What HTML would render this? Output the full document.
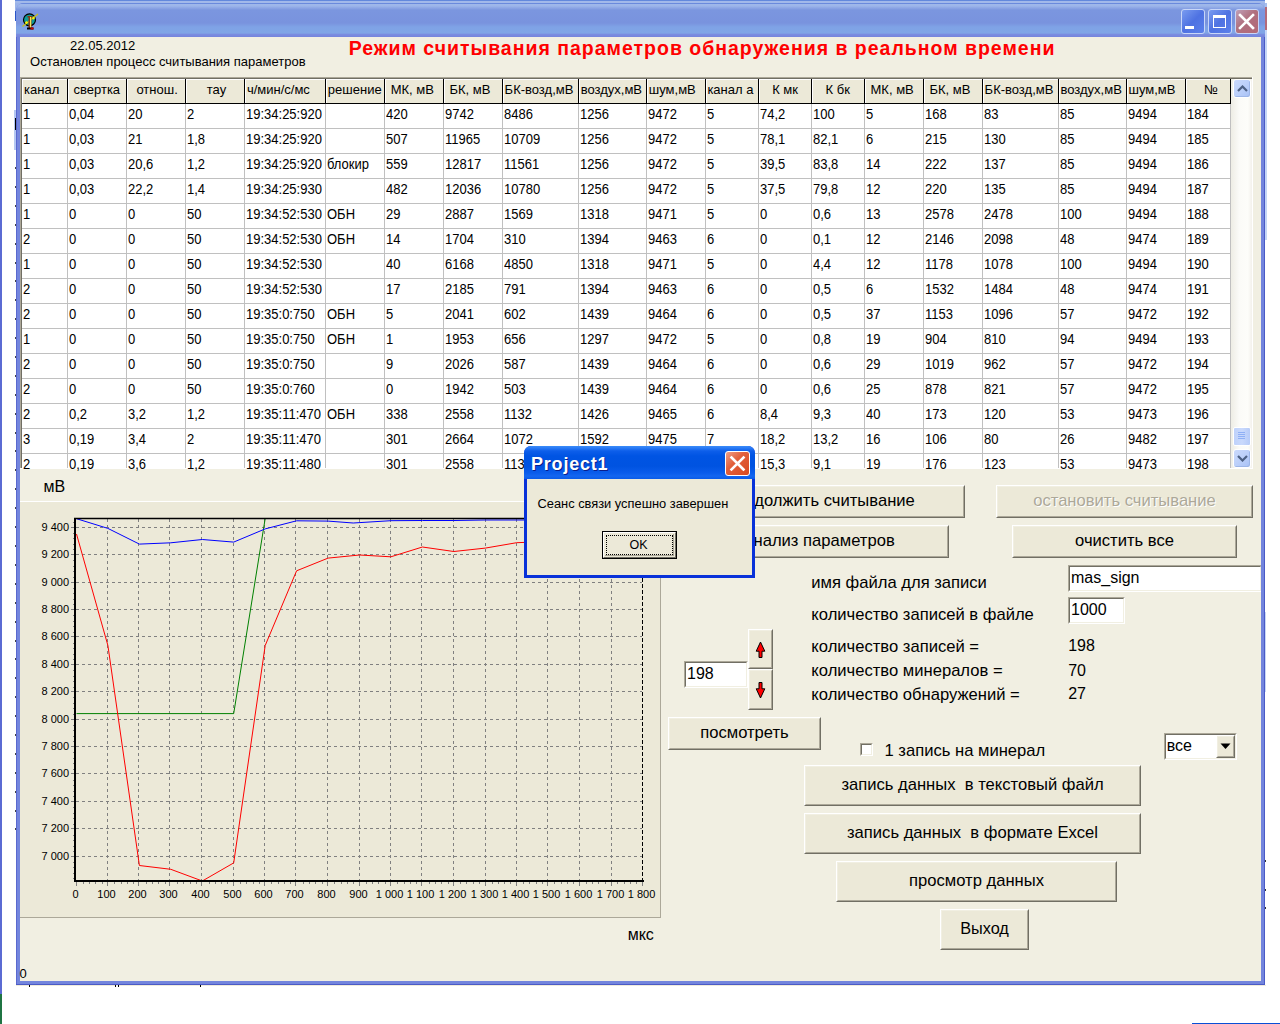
<!DOCTYPE html><html><head><meta charset="utf-8"><style>
html,body{margin:0;padding:0}
body{width:1280px;height:1024px;position:relative;overflow:hidden;background:#fff;font-family:"Liberation Sans", sans-serif}
div,svg{position:absolute}
.t{white-space:pre;color:#000}
.btn{box-sizing:border-box;background:#ECE9D8;border-top:1px solid #fff;border-left:1px solid #fff;border-right:1px solid #716F64;border-bottom:1px solid #716F64}
.btn::after{content:"";position:absolute;left:0;top:0;right:0;bottom:0;border-right:1px solid #ACA899;border-bottom:1px solid #ACA899;border-top:1px solid #F1EFE2;border-left:1px solid #F1EFE2}
.bi{position:absolute;left:0;right:0;top:0px;text-align:center;white-space:pre}
.edit{box-sizing:border-box;background:#fff;border-top:1px solid #ACA899;border-left:1px solid #ACA899;border-right:1px solid #fff;border-bottom:1px solid #fff;overflow:hidden}
.edit::before{content:"";position:absolute;left:0;top:0;right:0;bottom:0;border-top:1px solid #716F64;border-left:1px solid #716F64;border-right:1px solid #F1EFE2;border-bottom:1px solid #F1EFE2}
</style></head><body>
<div style="left:0px;top:0px;width:2px;height:994px;background:#5B6BD3"></div>
<div style="left:0px;top:994px;width:2px;height:30px;background:#1F7443"></div>
<div style="left:15px;top:0px;width:1250px;height:1px;background:#6389DC"></div>
<div style="left:15px;top:1px;width:1250px;height:2px;background:#A2B9EA"></div>
<div style="left:1265px;top:0px;width:15px;height:3px;background:#fff"></div>
<div style="left:16px;top:985px;width:1250px;height:1px;background:#EFEBDC"></div>
<div style="left:1192px;top:1023px;width:88px;height:1px;background:#0A4FD6"></div>
<div style="left:15px;top:167px;width:1px;height:2px;background:#444"></div>
<div style="left:15px;top:186px;width:1px;height:2px;background:#444"></div>
<div style="left:15px;top:205px;width:1px;height:2px;background:#444"></div>
<div style="left:15px;top:224px;width:1px;height:2px;background:#444"></div>
<div style="left:15px;top:243px;width:1px;height:2px;background:#444"></div>
<div style="left:15px;top:262px;width:1px;height:2px;background:#444"></div>
<div style="left:15px;top:280px;width:1px;height:2px;background:#444"></div>
<div style="left:15px;top:299px;width:1px;height:2px;background:#444"></div>
<div style="left:15px;top:318px;width:1px;height:2px;background:#444"></div>
<div style="left:15px;top:337px;width:1px;height:2px;background:#444"></div>
<div style="left:15px;top:356px;width:1px;height:2px;background:#444"></div>
<div style="left:15px;top:375px;width:1px;height:2px;background:#444"></div>
<div style="left:15px;top:394px;width:1px;height:2px;background:#444"></div>
<div style="left:15px;top:413px;width:1px;height:2px;background:#444"></div>
<div style="left:15px;top:432px;width:1px;height:2px;background:#444"></div>
<div style="left:15px;top:450px;width:1px;height:2px;background:#444"></div>
<div style="left:15px;top:469px;width:1px;height:2px;background:#444"></div>
<div style="left:15px;top:488px;width:1px;height:2px;background:#444"></div>
<div style="left:15px;top:507px;width:1px;height:2px;background:#444"></div>
<div style="left:15px;top:526px;width:1px;height:2px;background:#444"></div>
<div style="left:15px;top:545px;width:1px;height:2px;background:#444"></div>
<div style="left:15px;top:564px;width:1px;height:2px;background:#444"></div>
<div style="left:15px;top:583px;width:1px;height:2px;background:#444"></div>
<div style="left:15px;top:602px;width:1px;height:2px;background:#444"></div>
<div style="left:15px;top:621px;width:1px;height:2px;background:#444"></div>
<div style="left:15px;top:640px;width:1px;height:2px;background:#444"></div>
<div style="left:15px;top:658px;width:1px;height:2px;background:#444"></div>
<div style="left:15px;top:677px;width:1px;height:2px;background:#444"></div>
<div style="left:15px;top:696px;width:1px;height:2px;background:#444"></div>
<div style="left:15px;top:715px;width:1px;height:2px;background:#444"></div>
<div style="left:15px;top:734px;width:1px;height:2px;background:#444"></div>
<div style="left:15px;top:753px;width:1px;height:2px;background:#444"></div>
<div style="left:15px;top:772px;width:1px;height:2px;background:#444"></div>
<div style="left:15px;top:791px;width:1px;height:2px;background:#444"></div>
<div style="left:15px;top:810px;width:1px;height:2px;background:#444"></div>
<div style="left:15px;top:828px;width:1px;height:2px;background:#444"></div>
<div style="left:14px;top:110px;width:2px;height:40px;background:#B5C8F2"></div>
<div style="left:15px;top:118px;width:1px;height:12px;background:#000"></div>
<div style="left:1265px;top:860px;width:1px;height:2px;background:#333"></div>
<div style="left:1265px;top:889px;width:1px;height:2px;background:#333"></div>
<div style="left:1265px;top:907px;width:1px;height:2px;background:#333"></div>
<div style="left:1265px;top:612px;width:1px;height:80px;background:#C9D8F6"></div>
<div style="left:29px;top:985px;width:1px;height:2px;background:#000"></div>
<div style="left:115px;top:985px;width:1px;height:2px;background:#000"></div>
<div style="left:118px;top:985px;width:1px;height:2px;background:#000"></div>
<div style="left:200px;top:985px;width:1px;height:2px;background:#000"></div>
<div style="left:1265px;top:30px;width:2px;height:210px;background:#C5D6F7"></div>
<div style="left:1265px;top:7px;width:2px;height:23px;background:#B46A7A"></div>
<div style="left:1265px;top:3px;width:2px;height:4px;background:#A9BFEC"></div>
<div style="left:15px;top:3px;width:12px;height:8px;background:#9AB3E9"></div>
<div style="left:15px;top:11px;width:1px;height:10px;background:#2A55C8"></div>
<div style="left:1254px;top:3px;width:11px;height:8px;background:#9AB3E9"></div>
<div style="left:16px;top:3px;width:1249px;height:982px;background:#7385DD;border-radius:8px 8px 0 0;"></div>
<div style="left:16px;top:20px;width:1px;height:965px;background:#5A69CF"></div>
<div style="left:1264px;top:20px;width:1px;height:965px;background:#4B5BC6"></div>
<div style="left:16px;top:984px;width:1249px;height:1px;background:#4B5BC6"></div>
<div style="left:16px;top:3px;width:1249px;height:34px;border-radius:8px 8px 0 0;background:linear-gradient(#6A8ADC 0px,#6A8ADC 1px,#9FB8EA 1px,#9CB5EA 3px,#7B96DF 7px,#7993DE 20px,#7FA3E6 24px,#80A5E6 30px,#7A8CE0 31.5px,#7584DC 34px);"></div>
<div style="left:20px;top:37px;width:1241px;height:944px;background:#F1EFE2"></div>
<svg style="left:21px;top:12px" width="18" height="18" viewBox="0 0 18 18">
<circle cx="8.5" cy="7.8" r="6" fill="#0E9A96" stroke="#000" stroke-width="1.2"/>
<line x1="1.5" y1="14.5" x2="17" y2="2" stroke="#C8BE1A" stroke-width="1.3"/>
<path d="M5.5 9 l1.6 1.6 l-1.6 1.6 l-1.6 -1.6z" fill="#FFF200"/>
<path d="M12.5 4.5 l1.6 1.6 l-1.6 1.6 l-1.6 -1.6z" fill="#FFF200"/>
<rect x="6.5" y="4" width="5" height="1.5" fill="#8B2A10"/>
<rect x="7.5" y="4" width="3" height="12" fill="#8B3A10"/>
<rect x="9" y="5" width="1.2" height="11" fill="#F3E65A"/>
<rect x="6" y="15.5" width="6.5" height="2" fill="#000"/>
<rect x="9.5" y="15.5" width="3" height="2" fill="#C00000"/>
</svg>
<div style="left:1181px;top:9px;width:22px;height:23px;border:1px solid #C8D6F8;border-radius:3px;background:linear-gradient(135deg,#7A9CF0,#4E72E2 50%,#5B80EA)"></div>
<div style="left:1208px;top:9px;width:22px;height:23px;border:1px solid #C8D6F8;border-radius:3px;background:linear-gradient(135deg,#7A9CF0,#4E72E2 50%,#5B80EA)"></div>
<div style="left:1235px;top:9px;width:22px;height:23px;border:1px solid #C8D6F8;border-radius:3px;background:linear-gradient(135deg,#C0A0B8,#B0707E 45%,#B36A78)"></div>
<div style="left:1185px;top:26px;width:9px;height:3px;background:#fff"></div>
<div style="left:1213px;top:15px;width:13px;height:13px;box-sizing:border-box;border:1px solid #fff;border-top:3px solid #fff"></div>
<svg style="left:1238px;top:13px" width="17" height="17" viewBox="0 0 17 17"><path d="M2 2 L15 15 M15 2 L2 15" stroke="#fff" stroke-width="2.6" stroke-linecap="square"/></svg>
<div class="t" style="left:70.09px;top:37.60px;font-size:13px;line-height:15px;">22.05.2012</div>
<div class="t" style="left:30.09px;top:54.30px;font-size:13px;line-height:15px;">Остановлен процесс считывания параметров</div>
<div class="t" style="left:348.63px;top:37.04px;font-size:19.5px;line-height:22px;font-weight:bold;color:#F00;letter-spacing:0.99px">Режим считывания параметров обнаружения в реальном времени</div>
<div style="left:20px;top:77px;width:1233px;height:392px;background:#F1EFE2">
<div style="left:2px;top:2px;width:1209px;height:389px;background:#fff"></div>
<div style="left:0px;top:0px;width:1233px;height:1px;background:#ACA899"></div>
<div style="left:0px;top:0px;width:1px;height:392px;background:#ACA899"></div>
<div style="left:1px;top:1px;width:1231px;height:1px;background:#716F64"></div>
<div style="left:1px;top:1px;width:1px;height:390px;background:#716F64"></div>
<div style="left:1232px;top:0px;width:1px;height:392px;background:#fff"></div>
<div style="left:0px;top:391px;width:1233px;height:1px;background:#fff"></div>
<div style="left:2px;top:2px;width:45px;height:24px;background:#ECE9D8;border-top:1px solid #fff;border-left:1px solid #fff;box-sizing:border-box"></div>
<div style="left:47px;top:2px;width:1px;height:25px;background:#000"></div>
<div style="left:48px;top:2px;width:58px;height:24px;background:#ECE9D8;border-top:1px solid #fff;border-left:1px solid #fff;box-sizing:border-box"></div>
<div style="left:106px;top:2px;width:1px;height:25px;background:#000"></div>
<div style="left:107px;top:2px;width:58px;height:24px;background:#ECE9D8;border-top:1px solid #fff;border-left:1px solid #fff;box-sizing:border-box"></div>
<div style="left:165px;top:2px;width:1px;height:25px;background:#000"></div>
<div style="left:166px;top:2px;width:58px;height:24px;background:#ECE9D8;border-top:1px solid #fff;border-left:1px solid #fff;box-sizing:border-box"></div>
<div style="left:224px;top:2px;width:1px;height:25px;background:#000"></div>
<div style="left:225px;top:2px;width:80px;height:24px;background:#ECE9D8;border-top:1px solid #fff;border-left:1px solid #fff;box-sizing:border-box"></div>
<div style="left:305px;top:2px;width:1px;height:25px;background:#000"></div>
<div style="left:306px;top:2px;width:58px;height:24px;background:#ECE9D8;border-top:1px solid #fff;border-left:1px solid #fff;box-sizing:border-box"></div>
<div style="left:364px;top:2px;width:1px;height:25px;background:#000"></div>
<div style="left:365px;top:2px;width:58px;height:24px;background:#ECE9D8;border-top:1px solid #fff;border-left:1px solid #fff;box-sizing:border-box"></div>
<div style="left:423px;top:2px;width:1px;height:25px;background:#000"></div>
<div style="left:424px;top:2px;width:58px;height:24px;background:#ECE9D8;border-top:1px solid #fff;border-left:1px solid #fff;box-sizing:border-box"></div>
<div style="left:482px;top:2px;width:1px;height:25px;background:#000"></div>
<div style="left:483px;top:2px;width:75px;height:24px;background:#ECE9D8;border-top:1px solid #fff;border-left:1px solid #fff;box-sizing:border-box"></div>
<div style="left:558px;top:2px;width:1px;height:25px;background:#000"></div>
<div style="left:559px;top:2px;width:67px;height:24px;background:#ECE9D8;border-top:1px solid #fff;border-left:1px solid #fff;box-sizing:border-box"></div>
<div style="left:626px;top:2px;width:1px;height:25px;background:#000"></div>
<div style="left:627px;top:2px;width:58px;height:24px;background:#ECE9D8;border-top:1px solid #fff;border-left:1px solid #fff;box-sizing:border-box"></div>
<div style="left:685px;top:2px;width:1px;height:25px;background:#000"></div>
<div style="left:686px;top:2px;width:52px;height:24px;background:#ECE9D8;border-top:1px solid #fff;border-left:1px solid #fff;box-sizing:border-box"></div>
<div style="left:738px;top:2px;width:1px;height:25px;background:#000"></div>
<div style="left:739px;top:2px;width:52px;height:24px;background:#ECE9D8;border-top:1px solid #fff;border-left:1px solid #fff;box-sizing:border-box"></div>
<div style="left:791px;top:2px;width:1px;height:25px;background:#000"></div>
<div style="left:792px;top:2px;width:52px;height:24px;background:#ECE9D8;border-top:1px solid #fff;border-left:1px solid #fff;box-sizing:border-box"></div>
<div style="left:844px;top:2px;width:1px;height:25px;background:#000"></div>
<div style="left:845px;top:2px;width:58px;height:24px;background:#ECE9D8;border-top:1px solid #fff;border-left:1px solid #fff;box-sizing:border-box"></div>
<div style="left:903px;top:2px;width:1px;height:25px;background:#000"></div>
<div style="left:904px;top:2px;width:58px;height:24px;background:#ECE9D8;border-top:1px solid #fff;border-left:1px solid #fff;box-sizing:border-box"></div>
<div style="left:962px;top:2px;width:1px;height:25px;background:#000"></div>
<div style="left:963px;top:2px;width:75px;height:24px;background:#ECE9D8;border-top:1px solid #fff;border-left:1px solid #fff;box-sizing:border-box"></div>
<div style="left:1038px;top:2px;width:1px;height:25px;background:#000"></div>
<div style="left:1039px;top:2px;width:67px;height:24px;background:#ECE9D8;border-top:1px solid #fff;border-left:1px solid #fff;box-sizing:border-box"></div>
<div style="left:1106px;top:2px;width:1px;height:25px;background:#000"></div>
<div style="left:1107px;top:2px;width:58px;height:24px;background:#ECE9D8;border-top:1px solid #fff;border-left:1px solid #fff;box-sizing:border-box"></div>
<div style="left:1165px;top:2px;width:1px;height:25px;background:#000"></div>
<div style="left:1166px;top:2px;width:44px;height:24px;background:#ECE9D8;border-top:1px solid #fff;border-left:1px solid #fff;box-sizing:border-box"></div>
<div style="left:1210px;top:2px;width:1px;height:25px;background:#000"></div>
<div style="left:2px;top:26px;width:1209px;height:1px;background:#000"></div>
<div style="left:47px;top:27px;width:1px;height:364px;background:#C0C0C0"></div>
<div style="left:106px;top:27px;width:1px;height:364px;background:#C0C0C0"></div>
<div style="left:165px;top:27px;width:1px;height:364px;background:#C0C0C0"></div>
<div style="left:224px;top:27px;width:1px;height:364px;background:#C0C0C0"></div>
<div style="left:305px;top:27px;width:1px;height:364px;background:#C0C0C0"></div>
<div style="left:364px;top:27px;width:1px;height:364px;background:#C0C0C0"></div>
<div style="left:423px;top:27px;width:1px;height:364px;background:#C0C0C0"></div>
<div style="left:482px;top:27px;width:1px;height:364px;background:#C0C0C0"></div>
<div style="left:558px;top:27px;width:1px;height:364px;background:#C0C0C0"></div>
<div style="left:626px;top:27px;width:1px;height:364px;background:#C0C0C0"></div>
<div style="left:685px;top:27px;width:1px;height:364px;background:#C0C0C0"></div>
<div style="left:738px;top:27px;width:1px;height:364px;background:#C0C0C0"></div>
<div style="left:791px;top:27px;width:1px;height:364px;background:#C0C0C0"></div>
<div style="left:844px;top:27px;width:1px;height:364px;background:#C0C0C0"></div>
<div style="left:903px;top:27px;width:1px;height:364px;background:#C0C0C0"></div>
<div style="left:962px;top:27px;width:1px;height:364px;background:#C0C0C0"></div>
<div style="left:1038px;top:27px;width:1px;height:364px;background:#C0C0C0"></div>
<div style="left:1106px;top:27px;width:1px;height:364px;background:#C0C0C0"></div>
<div style="left:1165px;top:27px;width:1px;height:364px;background:#C0C0C0"></div>
<div style="left:1210px;top:27px;width:1px;height:364px;background:#C0C0C0"></div>
<div style="left:2px;top:51px;width:1209px;height:1px;background:#C0C0C0"></div>
<div style="left:2px;top:76px;width:1209px;height:1px;background:#C0C0C0"></div>
<div style="left:2px;top:101px;width:1209px;height:1px;background:#C0C0C0"></div>
<div style="left:2px;top:126px;width:1209px;height:1px;background:#C0C0C0"></div>
<div style="left:2px;top:151px;width:1209px;height:1px;background:#C0C0C0"></div>
<div style="left:2px;top:176px;width:1209px;height:1px;background:#C0C0C0"></div>
<div style="left:2px;top:201px;width:1209px;height:1px;background:#C0C0C0"></div>
<div style="left:2px;top:226px;width:1209px;height:1px;background:#C0C0C0"></div>
<div style="left:2px;top:251px;width:1209px;height:1px;background:#C0C0C0"></div>
<div style="left:2px;top:276px;width:1209px;height:1px;background:#C0C0C0"></div>
<div style="left:2px;top:301px;width:1209px;height:1px;background:#C0C0C0"></div>
<div style="left:2px;top:326px;width:1209px;height:1px;background:#C0C0C0"></div>
<div style="left:2px;top:351px;width:1209px;height:1px;background:#C0C0C0"></div>
<div style="left:2px;top:376px;width:1209px;height:1px;background:#C0C0C0"></div>
<div class="t" style="left:4.10px;top:5px;font-size:13px;line-height:15px">канал</div>
<div class="t" style="left:53.50px;top:5px;font-size:13px;line-height:15px">свертка</div>
<div class="t" style="left:116.40px;top:5px;font-size:13px;line-height:15px">отнош.</div>
<div class="t" style="left:186.80px;top:5px;font-size:13px;line-height:15px">тау</div>
<div class="t" style="left:226.90px;top:5px;font-size:13px;line-height:15px">ч/мин/с/мс</div>
<div class="t" style="left:307.85px;top:5px;font-size:13px;line-height:15px">решение</div>
<div class="t" style="left:370.70px;top:5px;font-size:13px;line-height:15px">МК, мВ</div>
<div class="t" style="left:429.40px;top:5px;font-size:13px;line-height:15px">БК, мВ</div>
<div class="t" style="left:484.60px;top:5px;font-size:13px;line-height:15px">БК-возд,мВ</div>
<div class="t" style="left:560.70px;top:5px;font-size:13px;line-height:15px">воздух,мВ</div>
<div class="t" style="left:628.80px;top:5px;font-size:13px;line-height:15px">шум,мВ</div>
<div class="t" style="left:687.40px;top:5px;font-size:13px;line-height:15px">канал а</div>
<div class="t" style="left:752.20px;top:5px;font-size:13px;line-height:15px">К мк</div>
<div class="t" style="left:805.50px;top:5px;font-size:13px;line-height:15px">К бк</div>
<div class="t" style="left:850.50px;top:5px;font-size:13px;line-height:15px">МК, мВ</div>
<div class="t" style="left:909.40px;top:5px;font-size:13px;line-height:15px">БК, мВ</div>
<div class="t" style="left:964.60px;top:5px;font-size:13px;line-height:15px">БК-возд,мВ</div>
<div class="t" style="left:1040.50px;top:5px;font-size:13px;line-height:15px">воздух,мВ</div>
<div class="t" style="left:1108.50px;top:5px;font-size:13px;line-height:15px">шум,мВ</div>
<div class="t" style="left:1184.10px;top:5px;font-size:13px;line-height:15px">№</div>
<div class="t" style="left:3px;top:30px;font-size:13px;line-height:15px;transform:scaleY(1.1);transform-origin:0 12px">1</div>
<div class="t" style="left:49px;top:30px;font-size:13px;line-height:15px;transform:scaleY(1.1);transform-origin:0 12px">0,04</div>
<div class="t" style="left:108px;top:30px;font-size:13px;line-height:15px;transform:scaleY(1.1);transform-origin:0 12px">20</div>
<div class="t" style="left:167px;top:30px;font-size:13px;line-height:15px;transform:scaleY(1.1);transform-origin:0 12px">2</div>
<div class="t" style="left:226px;top:30px;font-size:13px;line-height:15px;transform:scaleY(1.1);transform-origin:0 12px">19:34:25:920</div>
<div class="t" style="left:366px;top:30px;font-size:13px;line-height:15px;transform:scaleY(1.1);transform-origin:0 12px">420</div>
<div class="t" style="left:425px;top:30px;font-size:13px;line-height:15px;transform:scaleY(1.1);transform-origin:0 12px">9742</div>
<div class="t" style="left:484px;top:30px;font-size:13px;line-height:15px;transform:scaleY(1.1);transform-origin:0 12px">8486</div>
<div class="t" style="left:560px;top:30px;font-size:13px;line-height:15px;transform:scaleY(1.1);transform-origin:0 12px">1256</div>
<div class="t" style="left:628px;top:30px;font-size:13px;line-height:15px;transform:scaleY(1.1);transform-origin:0 12px">9472</div>
<div class="t" style="left:687px;top:30px;font-size:13px;line-height:15px;transform:scaleY(1.1);transform-origin:0 12px">5</div>
<div class="t" style="left:740px;top:30px;font-size:13px;line-height:15px;transform:scaleY(1.1);transform-origin:0 12px">74,2</div>
<div class="t" style="left:793px;top:30px;font-size:13px;line-height:15px;transform:scaleY(1.1);transform-origin:0 12px">100</div>
<div class="t" style="left:846px;top:30px;font-size:13px;line-height:15px;transform:scaleY(1.1);transform-origin:0 12px">5</div>
<div class="t" style="left:905px;top:30px;font-size:13px;line-height:15px;transform:scaleY(1.1);transform-origin:0 12px">168</div>
<div class="t" style="left:964px;top:30px;font-size:13px;line-height:15px;transform:scaleY(1.1);transform-origin:0 12px">83</div>
<div class="t" style="left:1040px;top:30px;font-size:13px;line-height:15px;transform:scaleY(1.1);transform-origin:0 12px">85</div>
<div class="t" style="left:1108px;top:30px;font-size:13px;line-height:15px;transform:scaleY(1.1);transform-origin:0 12px">9494</div>
<div class="t" style="left:1167px;top:30px;font-size:13px;line-height:15px;transform:scaleY(1.1);transform-origin:0 12px">184</div>
<div class="t" style="left:3px;top:55px;font-size:13px;line-height:15px;transform:scaleY(1.1);transform-origin:0 12px">1</div>
<div class="t" style="left:49px;top:55px;font-size:13px;line-height:15px;transform:scaleY(1.1);transform-origin:0 12px">0,03</div>
<div class="t" style="left:108px;top:55px;font-size:13px;line-height:15px;transform:scaleY(1.1);transform-origin:0 12px">21</div>
<div class="t" style="left:167px;top:55px;font-size:13px;line-height:15px;transform:scaleY(1.1);transform-origin:0 12px">1,8</div>
<div class="t" style="left:226px;top:55px;font-size:13px;line-height:15px;transform:scaleY(1.1);transform-origin:0 12px">19:34:25:920</div>
<div class="t" style="left:366px;top:55px;font-size:13px;line-height:15px;transform:scaleY(1.1);transform-origin:0 12px">507</div>
<div class="t" style="left:425px;top:55px;font-size:13px;line-height:15px;transform:scaleY(1.1);transform-origin:0 12px">11965</div>
<div class="t" style="left:484px;top:55px;font-size:13px;line-height:15px;transform:scaleY(1.1);transform-origin:0 12px">10709</div>
<div class="t" style="left:560px;top:55px;font-size:13px;line-height:15px;transform:scaleY(1.1);transform-origin:0 12px">1256</div>
<div class="t" style="left:628px;top:55px;font-size:13px;line-height:15px;transform:scaleY(1.1);transform-origin:0 12px">9472</div>
<div class="t" style="left:687px;top:55px;font-size:13px;line-height:15px;transform:scaleY(1.1);transform-origin:0 12px">5</div>
<div class="t" style="left:740px;top:55px;font-size:13px;line-height:15px;transform:scaleY(1.1);transform-origin:0 12px">78,1</div>
<div class="t" style="left:793px;top:55px;font-size:13px;line-height:15px;transform:scaleY(1.1);transform-origin:0 12px">82,1</div>
<div class="t" style="left:846px;top:55px;font-size:13px;line-height:15px;transform:scaleY(1.1);transform-origin:0 12px">6</div>
<div class="t" style="left:905px;top:55px;font-size:13px;line-height:15px;transform:scaleY(1.1);transform-origin:0 12px">215</div>
<div class="t" style="left:964px;top:55px;font-size:13px;line-height:15px;transform:scaleY(1.1);transform-origin:0 12px">130</div>
<div class="t" style="left:1040px;top:55px;font-size:13px;line-height:15px;transform:scaleY(1.1);transform-origin:0 12px">85</div>
<div class="t" style="left:1108px;top:55px;font-size:13px;line-height:15px;transform:scaleY(1.1);transform-origin:0 12px">9494</div>
<div class="t" style="left:1167px;top:55px;font-size:13px;line-height:15px;transform:scaleY(1.1);transform-origin:0 12px">185</div>
<div class="t" style="left:3px;top:80px;font-size:13px;line-height:15px;transform:scaleY(1.1);transform-origin:0 12px">1</div>
<div class="t" style="left:49px;top:80px;font-size:13px;line-height:15px;transform:scaleY(1.1);transform-origin:0 12px">0,03</div>
<div class="t" style="left:108px;top:80px;font-size:13px;line-height:15px;transform:scaleY(1.1);transform-origin:0 12px">20,6</div>
<div class="t" style="left:167px;top:80px;font-size:13px;line-height:15px;transform:scaleY(1.1);transform-origin:0 12px">1,2</div>
<div class="t" style="left:226px;top:80px;font-size:13px;line-height:15px;transform:scaleY(1.1);transform-origin:0 12px">19:34:25:920</div>
<div class="t" style="left:307px;top:80px;font-size:13px;line-height:15px;transform:scaleY(1.1);transform-origin:0 12px">блокир</div>
<div class="t" style="left:366px;top:80px;font-size:13px;line-height:15px;transform:scaleY(1.1);transform-origin:0 12px">559</div>
<div class="t" style="left:425px;top:80px;font-size:13px;line-height:15px;transform:scaleY(1.1);transform-origin:0 12px">12817</div>
<div class="t" style="left:484px;top:80px;font-size:13px;line-height:15px;transform:scaleY(1.1);transform-origin:0 12px">11561</div>
<div class="t" style="left:560px;top:80px;font-size:13px;line-height:15px;transform:scaleY(1.1);transform-origin:0 12px">1256</div>
<div class="t" style="left:628px;top:80px;font-size:13px;line-height:15px;transform:scaleY(1.1);transform-origin:0 12px">9472</div>
<div class="t" style="left:687px;top:80px;font-size:13px;line-height:15px;transform:scaleY(1.1);transform-origin:0 12px">5</div>
<div class="t" style="left:740px;top:80px;font-size:13px;line-height:15px;transform:scaleY(1.1);transform-origin:0 12px">39,5</div>
<div class="t" style="left:793px;top:80px;font-size:13px;line-height:15px;transform:scaleY(1.1);transform-origin:0 12px">83,8</div>
<div class="t" style="left:846px;top:80px;font-size:13px;line-height:15px;transform:scaleY(1.1);transform-origin:0 12px">14</div>
<div class="t" style="left:905px;top:80px;font-size:13px;line-height:15px;transform:scaleY(1.1);transform-origin:0 12px">222</div>
<div class="t" style="left:964px;top:80px;font-size:13px;line-height:15px;transform:scaleY(1.1);transform-origin:0 12px">137</div>
<div class="t" style="left:1040px;top:80px;font-size:13px;line-height:15px;transform:scaleY(1.1);transform-origin:0 12px">85</div>
<div class="t" style="left:1108px;top:80px;font-size:13px;line-height:15px;transform:scaleY(1.1);transform-origin:0 12px">9494</div>
<div class="t" style="left:1167px;top:80px;font-size:13px;line-height:15px;transform:scaleY(1.1);transform-origin:0 12px">186</div>
<div class="t" style="left:3px;top:105px;font-size:13px;line-height:15px;transform:scaleY(1.1);transform-origin:0 12px">1</div>
<div class="t" style="left:49px;top:105px;font-size:13px;line-height:15px;transform:scaleY(1.1);transform-origin:0 12px">0,03</div>
<div class="t" style="left:108px;top:105px;font-size:13px;line-height:15px;transform:scaleY(1.1);transform-origin:0 12px">22,2</div>
<div class="t" style="left:167px;top:105px;font-size:13px;line-height:15px;transform:scaleY(1.1);transform-origin:0 12px">1,4</div>
<div class="t" style="left:226px;top:105px;font-size:13px;line-height:15px;transform:scaleY(1.1);transform-origin:0 12px">19:34:25:930</div>
<div class="t" style="left:366px;top:105px;font-size:13px;line-height:15px;transform:scaleY(1.1);transform-origin:0 12px">482</div>
<div class="t" style="left:425px;top:105px;font-size:13px;line-height:15px;transform:scaleY(1.1);transform-origin:0 12px">12036</div>
<div class="t" style="left:484px;top:105px;font-size:13px;line-height:15px;transform:scaleY(1.1);transform-origin:0 12px">10780</div>
<div class="t" style="left:560px;top:105px;font-size:13px;line-height:15px;transform:scaleY(1.1);transform-origin:0 12px">1256</div>
<div class="t" style="left:628px;top:105px;font-size:13px;line-height:15px;transform:scaleY(1.1);transform-origin:0 12px">9472</div>
<div class="t" style="left:687px;top:105px;font-size:13px;line-height:15px;transform:scaleY(1.1);transform-origin:0 12px">5</div>
<div class="t" style="left:740px;top:105px;font-size:13px;line-height:15px;transform:scaleY(1.1);transform-origin:0 12px">37,5</div>
<div class="t" style="left:793px;top:105px;font-size:13px;line-height:15px;transform:scaleY(1.1);transform-origin:0 12px">79,8</div>
<div class="t" style="left:846px;top:105px;font-size:13px;line-height:15px;transform:scaleY(1.1);transform-origin:0 12px">12</div>
<div class="t" style="left:905px;top:105px;font-size:13px;line-height:15px;transform:scaleY(1.1);transform-origin:0 12px">220</div>
<div class="t" style="left:964px;top:105px;font-size:13px;line-height:15px;transform:scaleY(1.1);transform-origin:0 12px">135</div>
<div class="t" style="left:1040px;top:105px;font-size:13px;line-height:15px;transform:scaleY(1.1);transform-origin:0 12px">85</div>
<div class="t" style="left:1108px;top:105px;font-size:13px;line-height:15px;transform:scaleY(1.1);transform-origin:0 12px">9494</div>
<div class="t" style="left:1167px;top:105px;font-size:13px;line-height:15px;transform:scaleY(1.1);transform-origin:0 12px">187</div>
<div class="t" style="left:3px;top:130px;font-size:13px;line-height:15px;transform:scaleY(1.1);transform-origin:0 12px">1</div>
<div class="t" style="left:49px;top:130px;font-size:13px;line-height:15px;transform:scaleY(1.1);transform-origin:0 12px">0</div>
<div class="t" style="left:108px;top:130px;font-size:13px;line-height:15px;transform:scaleY(1.1);transform-origin:0 12px">0</div>
<div class="t" style="left:167px;top:130px;font-size:13px;line-height:15px;transform:scaleY(1.1);transform-origin:0 12px">50</div>
<div class="t" style="left:226px;top:130px;font-size:13px;line-height:15px;transform:scaleY(1.1);transform-origin:0 12px">19:34:52:530</div>
<div class="t" style="left:307px;top:130px;font-size:13px;line-height:15px;transform:scaleY(1.1);transform-origin:0 12px">ОБН</div>
<div class="t" style="left:366px;top:130px;font-size:13px;line-height:15px;transform:scaleY(1.1);transform-origin:0 12px">29</div>
<div class="t" style="left:425px;top:130px;font-size:13px;line-height:15px;transform:scaleY(1.1);transform-origin:0 12px">2887</div>
<div class="t" style="left:484px;top:130px;font-size:13px;line-height:15px;transform:scaleY(1.1);transform-origin:0 12px">1569</div>
<div class="t" style="left:560px;top:130px;font-size:13px;line-height:15px;transform:scaleY(1.1);transform-origin:0 12px">1318</div>
<div class="t" style="left:628px;top:130px;font-size:13px;line-height:15px;transform:scaleY(1.1);transform-origin:0 12px">9471</div>
<div class="t" style="left:687px;top:130px;font-size:13px;line-height:15px;transform:scaleY(1.1);transform-origin:0 12px">5</div>
<div class="t" style="left:740px;top:130px;font-size:13px;line-height:15px;transform:scaleY(1.1);transform-origin:0 12px">0</div>
<div class="t" style="left:793px;top:130px;font-size:13px;line-height:15px;transform:scaleY(1.1);transform-origin:0 12px">0,6</div>
<div class="t" style="left:846px;top:130px;font-size:13px;line-height:15px;transform:scaleY(1.1);transform-origin:0 12px">13</div>
<div class="t" style="left:905px;top:130px;font-size:13px;line-height:15px;transform:scaleY(1.1);transform-origin:0 12px">2578</div>
<div class="t" style="left:964px;top:130px;font-size:13px;line-height:15px;transform:scaleY(1.1);transform-origin:0 12px">2478</div>
<div class="t" style="left:1040px;top:130px;font-size:13px;line-height:15px;transform:scaleY(1.1);transform-origin:0 12px">100</div>
<div class="t" style="left:1108px;top:130px;font-size:13px;line-height:15px;transform:scaleY(1.1);transform-origin:0 12px">9494</div>
<div class="t" style="left:1167px;top:130px;font-size:13px;line-height:15px;transform:scaleY(1.1);transform-origin:0 12px">188</div>
<div class="t" style="left:3px;top:155px;font-size:13px;line-height:15px;transform:scaleY(1.1);transform-origin:0 12px">2</div>
<div class="t" style="left:49px;top:155px;font-size:13px;line-height:15px;transform:scaleY(1.1);transform-origin:0 12px">0</div>
<div class="t" style="left:108px;top:155px;font-size:13px;line-height:15px;transform:scaleY(1.1);transform-origin:0 12px">0</div>
<div class="t" style="left:167px;top:155px;font-size:13px;line-height:15px;transform:scaleY(1.1);transform-origin:0 12px">50</div>
<div class="t" style="left:226px;top:155px;font-size:13px;line-height:15px;transform:scaleY(1.1);transform-origin:0 12px">19:34:52:530</div>
<div class="t" style="left:307px;top:155px;font-size:13px;line-height:15px;transform:scaleY(1.1);transform-origin:0 12px">ОБН</div>
<div class="t" style="left:366px;top:155px;font-size:13px;line-height:15px;transform:scaleY(1.1);transform-origin:0 12px">14</div>
<div class="t" style="left:425px;top:155px;font-size:13px;line-height:15px;transform:scaleY(1.1);transform-origin:0 12px">1704</div>
<div class="t" style="left:484px;top:155px;font-size:13px;line-height:15px;transform:scaleY(1.1);transform-origin:0 12px">310</div>
<div class="t" style="left:560px;top:155px;font-size:13px;line-height:15px;transform:scaleY(1.1);transform-origin:0 12px">1394</div>
<div class="t" style="left:628px;top:155px;font-size:13px;line-height:15px;transform:scaleY(1.1);transform-origin:0 12px">9463</div>
<div class="t" style="left:687px;top:155px;font-size:13px;line-height:15px;transform:scaleY(1.1);transform-origin:0 12px">6</div>
<div class="t" style="left:740px;top:155px;font-size:13px;line-height:15px;transform:scaleY(1.1);transform-origin:0 12px">0</div>
<div class="t" style="left:793px;top:155px;font-size:13px;line-height:15px;transform:scaleY(1.1);transform-origin:0 12px">0,1</div>
<div class="t" style="left:846px;top:155px;font-size:13px;line-height:15px;transform:scaleY(1.1);transform-origin:0 12px">12</div>
<div class="t" style="left:905px;top:155px;font-size:13px;line-height:15px;transform:scaleY(1.1);transform-origin:0 12px">2146</div>
<div class="t" style="left:964px;top:155px;font-size:13px;line-height:15px;transform:scaleY(1.1);transform-origin:0 12px">2098</div>
<div class="t" style="left:1040px;top:155px;font-size:13px;line-height:15px;transform:scaleY(1.1);transform-origin:0 12px">48</div>
<div class="t" style="left:1108px;top:155px;font-size:13px;line-height:15px;transform:scaleY(1.1);transform-origin:0 12px">9474</div>
<div class="t" style="left:1167px;top:155px;font-size:13px;line-height:15px;transform:scaleY(1.1);transform-origin:0 12px">189</div>
<div class="t" style="left:3px;top:180px;font-size:13px;line-height:15px;transform:scaleY(1.1);transform-origin:0 12px">1</div>
<div class="t" style="left:49px;top:180px;font-size:13px;line-height:15px;transform:scaleY(1.1);transform-origin:0 12px">0</div>
<div class="t" style="left:108px;top:180px;font-size:13px;line-height:15px;transform:scaleY(1.1);transform-origin:0 12px">0</div>
<div class="t" style="left:167px;top:180px;font-size:13px;line-height:15px;transform:scaleY(1.1);transform-origin:0 12px">50</div>
<div class="t" style="left:226px;top:180px;font-size:13px;line-height:15px;transform:scaleY(1.1);transform-origin:0 12px">19:34:52:530</div>
<div class="t" style="left:366px;top:180px;font-size:13px;line-height:15px;transform:scaleY(1.1);transform-origin:0 12px">40</div>
<div class="t" style="left:425px;top:180px;font-size:13px;line-height:15px;transform:scaleY(1.1);transform-origin:0 12px">6168</div>
<div class="t" style="left:484px;top:180px;font-size:13px;line-height:15px;transform:scaleY(1.1);transform-origin:0 12px">4850</div>
<div class="t" style="left:560px;top:180px;font-size:13px;line-height:15px;transform:scaleY(1.1);transform-origin:0 12px">1318</div>
<div class="t" style="left:628px;top:180px;font-size:13px;line-height:15px;transform:scaleY(1.1);transform-origin:0 12px">9471</div>
<div class="t" style="left:687px;top:180px;font-size:13px;line-height:15px;transform:scaleY(1.1);transform-origin:0 12px">5</div>
<div class="t" style="left:740px;top:180px;font-size:13px;line-height:15px;transform:scaleY(1.1);transform-origin:0 12px">0</div>
<div class="t" style="left:793px;top:180px;font-size:13px;line-height:15px;transform:scaleY(1.1);transform-origin:0 12px">4,4</div>
<div class="t" style="left:846px;top:180px;font-size:13px;line-height:15px;transform:scaleY(1.1);transform-origin:0 12px">12</div>
<div class="t" style="left:905px;top:180px;font-size:13px;line-height:15px;transform:scaleY(1.1);transform-origin:0 12px">1178</div>
<div class="t" style="left:964px;top:180px;font-size:13px;line-height:15px;transform:scaleY(1.1);transform-origin:0 12px">1078</div>
<div class="t" style="left:1040px;top:180px;font-size:13px;line-height:15px;transform:scaleY(1.1);transform-origin:0 12px">100</div>
<div class="t" style="left:1108px;top:180px;font-size:13px;line-height:15px;transform:scaleY(1.1);transform-origin:0 12px">9494</div>
<div class="t" style="left:1167px;top:180px;font-size:13px;line-height:15px;transform:scaleY(1.1);transform-origin:0 12px">190</div>
<div class="t" style="left:3px;top:205px;font-size:13px;line-height:15px;transform:scaleY(1.1);transform-origin:0 12px">2</div>
<div class="t" style="left:49px;top:205px;font-size:13px;line-height:15px;transform:scaleY(1.1);transform-origin:0 12px">0</div>
<div class="t" style="left:108px;top:205px;font-size:13px;line-height:15px;transform:scaleY(1.1);transform-origin:0 12px">0</div>
<div class="t" style="left:167px;top:205px;font-size:13px;line-height:15px;transform:scaleY(1.1);transform-origin:0 12px">50</div>
<div class="t" style="left:226px;top:205px;font-size:13px;line-height:15px;transform:scaleY(1.1);transform-origin:0 12px">19:34:52:530</div>
<div class="t" style="left:366px;top:205px;font-size:13px;line-height:15px;transform:scaleY(1.1);transform-origin:0 12px">17</div>
<div class="t" style="left:425px;top:205px;font-size:13px;line-height:15px;transform:scaleY(1.1);transform-origin:0 12px">2185</div>
<div class="t" style="left:484px;top:205px;font-size:13px;line-height:15px;transform:scaleY(1.1);transform-origin:0 12px">791</div>
<div class="t" style="left:560px;top:205px;font-size:13px;line-height:15px;transform:scaleY(1.1);transform-origin:0 12px">1394</div>
<div class="t" style="left:628px;top:205px;font-size:13px;line-height:15px;transform:scaleY(1.1);transform-origin:0 12px">9463</div>
<div class="t" style="left:687px;top:205px;font-size:13px;line-height:15px;transform:scaleY(1.1);transform-origin:0 12px">6</div>
<div class="t" style="left:740px;top:205px;font-size:13px;line-height:15px;transform:scaleY(1.1);transform-origin:0 12px">0</div>
<div class="t" style="left:793px;top:205px;font-size:13px;line-height:15px;transform:scaleY(1.1);transform-origin:0 12px">0,5</div>
<div class="t" style="left:846px;top:205px;font-size:13px;line-height:15px;transform:scaleY(1.1);transform-origin:0 12px">6</div>
<div class="t" style="left:905px;top:205px;font-size:13px;line-height:15px;transform:scaleY(1.1);transform-origin:0 12px">1532</div>
<div class="t" style="left:964px;top:205px;font-size:13px;line-height:15px;transform:scaleY(1.1);transform-origin:0 12px">1484</div>
<div class="t" style="left:1040px;top:205px;font-size:13px;line-height:15px;transform:scaleY(1.1);transform-origin:0 12px">48</div>
<div class="t" style="left:1108px;top:205px;font-size:13px;line-height:15px;transform:scaleY(1.1);transform-origin:0 12px">9474</div>
<div class="t" style="left:1167px;top:205px;font-size:13px;line-height:15px;transform:scaleY(1.1);transform-origin:0 12px">191</div>
<div class="t" style="left:3px;top:230px;font-size:13px;line-height:15px;transform:scaleY(1.1);transform-origin:0 12px">2</div>
<div class="t" style="left:49px;top:230px;font-size:13px;line-height:15px;transform:scaleY(1.1);transform-origin:0 12px">0</div>
<div class="t" style="left:108px;top:230px;font-size:13px;line-height:15px;transform:scaleY(1.1);transform-origin:0 12px">0</div>
<div class="t" style="left:167px;top:230px;font-size:13px;line-height:15px;transform:scaleY(1.1);transform-origin:0 12px">50</div>
<div class="t" style="left:226px;top:230px;font-size:13px;line-height:15px;transform:scaleY(1.1);transform-origin:0 12px">19:35:0:750</div>
<div class="t" style="left:307px;top:230px;font-size:13px;line-height:15px;transform:scaleY(1.1);transform-origin:0 12px">ОБН</div>
<div class="t" style="left:366px;top:230px;font-size:13px;line-height:15px;transform:scaleY(1.1);transform-origin:0 12px">5</div>
<div class="t" style="left:425px;top:230px;font-size:13px;line-height:15px;transform:scaleY(1.1);transform-origin:0 12px">2041</div>
<div class="t" style="left:484px;top:230px;font-size:13px;line-height:15px;transform:scaleY(1.1);transform-origin:0 12px">602</div>
<div class="t" style="left:560px;top:230px;font-size:13px;line-height:15px;transform:scaleY(1.1);transform-origin:0 12px">1439</div>
<div class="t" style="left:628px;top:230px;font-size:13px;line-height:15px;transform:scaleY(1.1);transform-origin:0 12px">9464</div>
<div class="t" style="left:687px;top:230px;font-size:13px;line-height:15px;transform:scaleY(1.1);transform-origin:0 12px">6</div>
<div class="t" style="left:740px;top:230px;font-size:13px;line-height:15px;transform:scaleY(1.1);transform-origin:0 12px">0</div>
<div class="t" style="left:793px;top:230px;font-size:13px;line-height:15px;transform:scaleY(1.1);transform-origin:0 12px">0,5</div>
<div class="t" style="left:846px;top:230px;font-size:13px;line-height:15px;transform:scaleY(1.1);transform-origin:0 12px">37</div>
<div class="t" style="left:905px;top:230px;font-size:13px;line-height:15px;transform:scaleY(1.1);transform-origin:0 12px">1153</div>
<div class="t" style="left:964px;top:230px;font-size:13px;line-height:15px;transform:scaleY(1.1);transform-origin:0 12px">1096</div>
<div class="t" style="left:1040px;top:230px;font-size:13px;line-height:15px;transform:scaleY(1.1);transform-origin:0 12px">57</div>
<div class="t" style="left:1108px;top:230px;font-size:13px;line-height:15px;transform:scaleY(1.1);transform-origin:0 12px">9472</div>
<div class="t" style="left:1167px;top:230px;font-size:13px;line-height:15px;transform:scaleY(1.1);transform-origin:0 12px">192</div>
<div class="t" style="left:3px;top:255px;font-size:13px;line-height:15px;transform:scaleY(1.1);transform-origin:0 12px">1</div>
<div class="t" style="left:49px;top:255px;font-size:13px;line-height:15px;transform:scaleY(1.1);transform-origin:0 12px">0</div>
<div class="t" style="left:108px;top:255px;font-size:13px;line-height:15px;transform:scaleY(1.1);transform-origin:0 12px">0</div>
<div class="t" style="left:167px;top:255px;font-size:13px;line-height:15px;transform:scaleY(1.1);transform-origin:0 12px">50</div>
<div class="t" style="left:226px;top:255px;font-size:13px;line-height:15px;transform:scaleY(1.1);transform-origin:0 12px">19:35:0:750</div>
<div class="t" style="left:307px;top:255px;font-size:13px;line-height:15px;transform:scaleY(1.1);transform-origin:0 12px">ОБН</div>
<div class="t" style="left:366px;top:255px;font-size:13px;line-height:15px;transform:scaleY(1.1);transform-origin:0 12px">1</div>
<div class="t" style="left:425px;top:255px;font-size:13px;line-height:15px;transform:scaleY(1.1);transform-origin:0 12px">1953</div>
<div class="t" style="left:484px;top:255px;font-size:13px;line-height:15px;transform:scaleY(1.1);transform-origin:0 12px">656</div>
<div class="t" style="left:560px;top:255px;font-size:13px;line-height:15px;transform:scaleY(1.1);transform-origin:0 12px">1297</div>
<div class="t" style="left:628px;top:255px;font-size:13px;line-height:15px;transform:scaleY(1.1);transform-origin:0 12px">9472</div>
<div class="t" style="left:687px;top:255px;font-size:13px;line-height:15px;transform:scaleY(1.1);transform-origin:0 12px">5</div>
<div class="t" style="left:740px;top:255px;font-size:13px;line-height:15px;transform:scaleY(1.1);transform-origin:0 12px">0</div>
<div class="t" style="left:793px;top:255px;font-size:13px;line-height:15px;transform:scaleY(1.1);transform-origin:0 12px">0,8</div>
<div class="t" style="left:846px;top:255px;font-size:13px;line-height:15px;transform:scaleY(1.1);transform-origin:0 12px">19</div>
<div class="t" style="left:905px;top:255px;font-size:13px;line-height:15px;transform:scaleY(1.1);transform-origin:0 12px">904</div>
<div class="t" style="left:964px;top:255px;font-size:13px;line-height:15px;transform:scaleY(1.1);transform-origin:0 12px">810</div>
<div class="t" style="left:1040px;top:255px;font-size:13px;line-height:15px;transform:scaleY(1.1);transform-origin:0 12px">94</div>
<div class="t" style="left:1108px;top:255px;font-size:13px;line-height:15px;transform:scaleY(1.1);transform-origin:0 12px">9494</div>
<div class="t" style="left:1167px;top:255px;font-size:13px;line-height:15px;transform:scaleY(1.1);transform-origin:0 12px">193</div>
<div class="t" style="left:3px;top:280px;font-size:13px;line-height:15px;transform:scaleY(1.1);transform-origin:0 12px">2</div>
<div class="t" style="left:49px;top:280px;font-size:13px;line-height:15px;transform:scaleY(1.1);transform-origin:0 12px">0</div>
<div class="t" style="left:108px;top:280px;font-size:13px;line-height:15px;transform:scaleY(1.1);transform-origin:0 12px">0</div>
<div class="t" style="left:167px;top:280px;font-size:13px;line-height:15px;transform:scaleY(1.1);transform-origin:0 12px">50</div>
<div class="t" style="left:226px;top:280px;font-size:13px;line-height:15px;transform:scaleY(1.1);transform-origin:0 12px">19:35:0:750</div>
<div class="t" style="left:366px;top:280px;font-size:13px;line-height:15px;transform:scaleY(1.1);transform-origin:0 12px">9</div>
<div class="t" style="left:425px;top:280px;font-size:13px;line-height:15px;transform:scaleY(1.1);transform-origin:0 12px">2026</div>
<div class="t" style="left:484px;top:280px;font-size:13px;line-height:15px;transform:scaleY(1.1);transform-origin:0 12px">587</div>
<div class="t" style="left:560px;top:280px;font-size:13px;line-height:15px;transform:scaleY(1.1);transform-origin:0 12px">1439</div>
<div class="t" style="left:628px;top:280px;font-size:13px;line-height:15px;transform:scaleY(1.1);transform-origin:0 12px">9464</div>
<div class="t" style="left:687px;top:280px;font-size:13px;line-height:15px;transform:scaleY(1.1);transform-origin:0 12px">6</div>
<div class="t" style="left:740px;top:280px;font-size:13px;line-height:15px;transform:scaleY(1.1);transform-origin:0 12px">0</div>
<div class="t" style="left:793px;top:280px;font-size:13px;line-height:15px;transform:scaleY(1.1);transform-origin:0 12px">0,6</div>
<div class="t" style="left:846px;top:280px;font-size:13px;line-height:15px;transform:scaleY(1.1);transform-origin:0 12px">29</div>
<div class="t" style="left:905px;top:280px;font-size:13px;line-height:15px;transform:scaleY(1.1);transform-origin:0 12px">1019</div>
<div class="t" style="left:964px;top:280px;font-size:13px;line-height:15px;transform:scaleY(1.1);transform-origin:0 12px">962</div>
<div class="t" style="left:1040px;top:280px;font-size:13px;line-height:15px;transform:scaleY(1.1);transform-origin:0 12px">57</div>
<div class="t" style="left:1108px;top:280px;font-size:13px;line-height:15px;transform:scaleY(1.1);transform-origin:0 12px">9472</div>
<div class="t" style="left:1167px;top:280px;font-size:13px;line-height:15px;transform:scaleY(1.1);transform-origin:0 12px">194</div>
<div class="t" style="left:3px;top:305px;font-size:13px;line-height:15px;transform:scaleY(1.1);transform-origin:0 12px">2</div>
<div class="t" style="left:49px;top:305px;font-size:13px;line-height:15px;transform:scaleY(1.1);transform-origin:0 12px">0</div>
<div class="t" style="left:108px;top:305px;font-size:13px;line-height:15px;transform:scaleY(1.1);transform-origin:0 12px">0</div>
<div class="t" style="left:167px;top:305px;font-size:13px;line-height:15px;transform:scaleY(1.1);transform-origin:0 12px">50</div>
<div class="t" style="left:226px;top:305px;font-size:13px;line-height:15px;transform:scaleY(1.1);transform-origin:0 12px">19:35:0:760</div>
<div class="t" style="left:366px;top:305px;font-size:13px;line-height:15px;transform:scaleY(1.1);transform-origin:0 12px">0</div>
<div class="t" style="left:425px;top:305px;font-size:13px;line-height:15px;transform:scaleY(1.1);transform-origin:0 12px">1942</div>
<div class="t" style="left:484px;top:305px;font-size:13px;line-height:15px;transform:scaleY(1.1);transform-origin:0 12px">503</div>
<div class="t" style="left:560px;top:305px;font-size:13px;line-height:15px;transform:scaleY(1.1);transform-origin:0 12px">1439</div>
<div class="t" style="left:628px;top:305px;font-size:13px;line-height:15px;transform:scaleY(1.1);transform-origin:0 12px">9464</div>
<div class="t" style="left:687px;top:305px;font-size:13px;line-height:15px;transform:scaleY(1.1);transform-origin:0 12px">6</div>
<div class="t" style="left:740px;top:305px;font-size:13px;line-height:15px;transform:scaleY(1.1);transform-origin:0 12px">0</div>
<div class="t" style="left:793px;top:305px;font-size:13px;line-height:15px;transform:scaleY(1.1);transform-origin:0 12px">0,6</div>
<div class="t" style="left:846px;top:305px;font-size:13px;line-height:15px;transform:scaleY(1.1);transform-origin:0 12px">25</div>
<div class="t" style="left:905px;top:305px;font-size:13px;line-height:15px;transform:scaleY(1.1);transform-origin:0 12px">878</div>
<div class="t" style="left:964px;top:305px;font-size:13px;line-height:15px;transform:scaleY(1.1);transform-origin:0 12px">821</div>
<div class="t" style="left:1040px;top:305px;font-size:13px;line-height:15px;transform:scaleY(1.1);transform-origin:0 12px">57</div>
<div class="t" style="left:1108px;top:305px;font-size:13px;line-height:15px;transform:scaleY(1.1);transform-origin:0 12px">9472</div>
<div class="t" style="left:1167px;top:305px;font-size:13px;line-height:15px;transform:scaleY(1.1);transform-origin:0 12px">195</div>
<div class="t" style="left:3px;top:330px;font-size:13px;line-height:15px;transform:scaleY(1.1);transform-origin:0 12px">2</div>
<div class="t" style="left:49px;top:330px;font-size:13px;line-height:15px;transform:scaleY(1.1);transform-origin:0 12px">0,2</div>
<div class="t" style="left:108px;top:330px;font-size:13px;line-height:15px;transform:scaleY(1.1);transform-origin:0 12px">3,2</div>
<div class="t" style="left:167px;top:330px;font-size:13px;line-height:15px;transform:scaleY(1.1);transform-origin:0 12px">1,2</div>
<div class="t" style="left:226px;top:330px;font-size:13px;line-height:15px;transform:scaleY(1.1);transform-origin:0 12px">19:35:11:470</div>
<div class="t" style="left:307px;top:330px;font-size:13px;line-height:15px;transform:scaleY(1.1);transform-origin:0 12px">ОБН</div>
<div class="t" style="left:366px;top:330px;font-size:13px;line-height:15px;transform:scaleY(1.1);transform-origin:0 12px">338</div>
<div class="t" style="left:425px;top:330px;font-size:13px;line-height:15px;transform:scaleY(1.1);transform-origin:0 12px">2558</div>
<div class="t" style="left:484px;top:330px;font-size:13px;line-height:15px;transform:scaleY(1.1);transform-origin:0 12px">1132</div>
<div class="t" style="left:560px;top:330px;font-size:13px;line-height:15px;transform:scaleY(1.1);transform-origin:0 12px">1426</div>
<div class="t" style="left:628px;top:330px;font-size:13px;line-height:15px;transform:scaleY(1.1);transform-origin:0 12px">9465</div>
<div class="t" style="left:687px;top:330px;font-size:13px;line-height:15px;transform:scaleY(1.1);transform-origin:0 12px">6</div>
<div class="t" style="left:740px;top:330px;font-size:13px;line-height:15px;transform:scaleY(1.1);transform-origin:0 12px">8,4</div>
<div class="t" style="left:793px;top:330px;font-size:13px;line-height:15px;transform:scaleY(1.1);transform-origin:0 12px">9,3</div>
<div class="t" style="left:846px;top:330px;font-size:13px;line-height:15px;transform:scaleY(1.1);transform-origin:0 12px">40</div>
<div class="t" style="left:905px;top:330px;font-size:13px;line-height:15px;transform:scaleY(1.1);transform-origin:0 12px">173</div>
<div class="t" style="left:964px;top:330px;font-size:13px;line-height:15px;transform:scaleY(1.1);transform-origin:0 12px">120</div>
<div class="t" style="left:1040px;top:330px;font-size:13px;line-height:15px;transform:scaleY(1.1);transform-origin:0 12px">53</div>
<div class="t" style="left:1108px;top:330px;font-size:13px;line-height:15px;transform:scaleY(1.1);transform-origin:0 12px">9473</div>
<div class="t" style="left:1167px;top:330px;font-size:13px;line-height:15px;transform:scaleY(1.1);transform-origin:0 12px">196</div>
<div class="t" style="left:3px;top:355px;font-size:13px;line-height:15px;transform:scaleY(1.1);transform-origin:0 12px">3</div>
<div class="t" style="left:49px;top:355px;font-size:13px;line-height:15px;transform:scaleY(1.1);transform-origin:0 12px">0,19</div>
<div class="t" style="left:108px;top:355px;font-size:13px;line-height:15px;transform:scaleY(1.1);transform-origin:0 12px">3,4</div>
<div class="t" style="left:167px;top:355px;font-size:13px;line-height:15px;transform:scaleY(1.1);transform-origin:0 12px">2</div>
<div class="t" style="left:226px;top:355px;font-size:13px;line-height:15px;transform:scaleY(1.1);transform-origin:0 12px">19:35:11:470</div>
<div class="t" style="left:366px;top:355px;font-size:13px;line-height:15px;transform:scaleY(1.1);transform-origin:0 12px">301</div>
<div class="t" style="left:425px;top:355px;font-size:13px;line-height:15px;transform:scaleY(1.1);transform-origin:0 12px">2664</div>
<div class="t" style="left:484px;top:355px;font-size:13px;line-height:15px;transform:scaleY(1.1);transform-origin:0 12px">1072</div>
<div class="t" style="left:560px;top:355px;font-size:13px;line-height:15px;transform:scaleY(1.1);transform-origin:0 12px">1592</div>
<div class="t" style="left:628px;top:355px;font-size:13px;line-height:15px;transform:scaleY(1.1);transform-origin:0 12px">9475</div>
<div class="t" style="left:687px;top:355px;font-size:13px;line-height:15px;transform:scaleY(1.1);transform-origin:0 12px">7</div>
<div class="t" style="left:740px;top:355px;font-size:13px;line-height:15px;transform:scaleY(1.1);transform-origin:0 12px">18,2</div>
<div class="t" style="left:793px;top:355px;font-size:13px;line-height:15px;transform:scaleY(1.1);transform-origin:0 12px">13,2</div>
<div class="t" style="left:846px;top:355px;font-size:13px;line-height:15px;transform:scaleY(1.1);transform-origin:0 12px">16</div>
<div class="t" style="left:905px;top:355px;font-size:13px;line-height:15px;transform:scaleY(1.1);transform-origin:0 12px">106</div>
<div class="t" style="left:964px;top:355px;font-size:13px;line-height:15px;transform:scaleY(1.1);transform-origin:0 12px">80</div>
<div class="t" style="left:1040px;top:355px;font-size:13px;line-height:15px;transform:scaleY(1.1);transform-origin:0 12px">26</div>
<div class="t" style="left:1108px;top:355px;font-size:13px;line-height:15px;transform:scaleY(1.1);transform-origin:0 12px">9482</div>
<div class="t" style="left:1167px;top:355px;font-size:13px;line-height:15px;transform:scaleY(1.1);transform-origin:0 12px">197</div>
<div class="t" style="left:3px;top:380px;font-size:13px;line-height:15px;transform:scaleY(1.1);transform-origin:0 12px">2</div>
<div class="t" style="left:49px;top:380px;font-size:13px;line-height:15px;transform:scaleY(1.1);transform-origin:0 12px">0,19</div>
<div class="t" style="left:108px;top:380px;font-size:13px;line-height:15px;transform:scaleY(1.1);transform-origin:0 12px">3,6</div>
<div class="t" style="left:167px;top:380px;font-size:13px;line-height:15px;transform:scaleY(1.1);transform-origin:0 12px">1,2</div>
<div class="t" style="left:226px;top:380px;font-size:13px;line-height:15px;transform:scaleY(1.1);transform-origin:0 12px">19:35:11:480</div>
<div class="t" style="left:366px;top:380px;font-size:13px;line-height:15px;transform:scaleY(1.1);transform-origin:0 12px">301</div>
<div class="t" style="left:425px;top:380px;font-size:13px;line-height:15px;transform:scaleY(1.1);transform-origin:0 12px">2558</div>
<div class="t" style="left:484px;top:380px;font-size:13px;line-height:15px;transform:scaleY(1.1);transform-origin:0 12px">1132</div>
<div class="t" style="left:560px;top:380px;font-size:13px;line-height:15px;transform:scaleY(1.1);transform-origin:0 12px">1426</div>
<div class="t" style="left:628px;top:380px;font-size:13px;line-height:15px;transform:scaleY(1.1);transform-origin:0 12px">9465</div>
<div class="t" style="left:687px;top:380px;font-size:13px;line-height:15px;transform:scaleY(1.1);transform-origin:0 12px">6</div>
<div class="t" style="left:740px;top:380px;font-size:13px;line-height:15px;transform:scaleY(1.1);transform-origin:0 12px">15,3</div>
<div class="t" style="left:793px;top:380px;font-size:13px;line-height:15px;transform:scaleY(1.1);transform-origin:0 12px">9,1</div>
<div class="t" style="left:846px;top:380px;font-size:13px;line-height:15px;transform:scaleY(1.1);transform-origin:0 12px">19</div>
<div class="t" style="left:905px;top:380px;font-size:13px;line-height:15px;transform:scaleY(1.1);transform-origin:0 12px">176</div>
<div class="t" style="left:964px;top:380px;font-size:13px;line-height:15px;transform:scaleY(1.1);transform-origin:0 12px">123</div>
<div class="t" style="left:1040px;top:380px;font-size:13px;line-height:15px;transform:scaleY(1.1);transform-origin:0 12px">53</div>
<div class="t" style="left:1108px;top:380px;font-size:13px;line-height:15px;transform:scaleY(1.1);transform-origin:0 12px">9473</div>
<div class="t" style="left:1167px;top:380px;font-size:13px;line-height:15px;transform:scaleY(1.1);transform-origin:0 12px">198</div>
<div style="left:1211px;top:2px;width:21px;height:389px;background:linear-gradient(90deg,#EEEDE5,#FBFBF8 40%,#FDFDFA 80%,#F3F1EC)"></div>
<div style="left:1213px;top:2px;width:18px;height:19px;box-sizing:border-box;border:1px solid #fff;border-radius:3px;background:linear-gradient(135deg,#CAD9FC,#BCD0FA 50%,#A8C1F6);box-shadow:inset -1px -1px 0 #9DB6E8"></div>
<div style="left:1213px;top:372px;width:18px;height:19px;box-sizing:border-box;border:1px solid #fff;border-radius:3px;background:linear-gradient(135deg,#CAD9FC,#BCD0FA 50%,#A8C1F6);box-shadow:inset -1px -1px 0 #9DB6E8"></div>
<div style="left:1213px;top:350px;width:18px;height:19px;box-sizing:border-box;border:1px solid #fff;border-radius:2px;background:linear-gradient(90deg,#BFD2FB,#C9D9FC 50%,#B6CBF8)"></div>
<div style="left:1218px;top:355px;width:7px;height:1px;background:#8FB0F5"></div>
<div style="left:1218px;top:357px;width:7px;height:1px;background:#8FB0F5"></div>
<div style="left:1218px;top:359px;width:7px;height:1px;background:#8FB0F5"></div>
<div style="left:1218px;top:361px;width:7px;height:1px;background:#8FB0F5"></div>
<svg style="left:1217px;top:8px" width="11" height="7" viewBox="0 0 11 7"><path d="M1 6 L5.5 1.5 L10 6" stroke="#4D6185" stroke-width="2.2" fill="none"/></svg>
<svg style="left:1217px;top:378px" width="11" height="7" viewBox="0 0 11 7"><path d="M1 1 L5.5 5.5 L10 1" stroke="#4D6185" stroke-width="2.2" fill="none"/></svg>
</div>
<div class="t" style="left:43.58px;top:478.46px;font-size:16px;line-height:18px;">мВ</div>
<div style="left:20px;top:501px;width:641px;height:417px;background:#ECE9D8"></div>
<div style="left:20px;top:501px;width:641px;height:1px;background:#fff"></div>
<div style="left:20px;top:917px;width:641px;height:1px;background:#ACA899"></div>
<div style="left:660px;top:501px;width:1px;height:417px;background:#ACA899"></div>
<svg style="left:0;top:0" width="1280" height="1024" viewBox="0 0 1280 1024">
<line x1="76" y1="856.5" x2="642" y2="856.5" stroke="#808080" stroke-dasharray="3 3"/>
<line x1="76" y1="828.5" x2="642" y2="828.5" stroke="#808080" stroke-dasharray="3 3"/>
<line x1="76" y1="801.5" x2="642" y2="801.5" stroke="#808080" stroke-dasharray="3 3"/>
<line x1="76" y1="773.5" x2="642" y2="773.5" stroke="#808080" stroke-dasharray="3 3"/>
<line x1="76" y1="746.5" x2="642" y2="746.5" stroke="#808080" stroke-dasharray="3 3"/>
<line x1="76" y1="719.5" x2="642" y2="719.5" stroke="#808080" stroke-dasharray="3 3"/>
<line x1="76" y1="691.5" x2="642" y2="691.5" stroke="#808080" stroke-dasharray="3 3"/>
<line x1="76" y1="664.5" x2="642" y2="664.5" stroke="#808080" stroke-dasharray="3 3"/>
<line x1="76" y1="636.5" x2="642" y2="636.5" stroke="#808080" stroke-dasharray="3 3"/>
<line x1="76" y1="609.5" x2="642" y2="609.5" stroke="#808080" stroke-dasharray="3 3"/>
<line x1="76" y1="582.5" x2="642" y2="582.5" stroke="#808080" stroke-dasharray="3 3"/>
<line x1="76" y1="554.5" x2="642" y2="554.5" stroke="#808080" stroke-dasharray="3 3"/>
<line x1="76" y1="527.5" x2="642" y2="527.5" stroke="#808080" stroke-dasharray="3 3"/>
<line x1="107.5" y1="519" x2="107.5" y2="880" stroke="#808080" stroke-dasharray="3 3"/>
<line x1="138.5" y1="519" x2="138.5" y2="880" stroke="#808080" stroke-dasharray="3 3"/>
<line x1="169.5" y1="519" x2="169.5" y2="880" stroke="#808080" stroke-dasharray="3 3"/>
<line x1="201.5" y1="519" x2="201.5" y2="880" stroke="#808080" stroke-dasharray="3 3"/>
<line x1="233.5" y1="519" x2="233.5" y2="880" stroke="#808080" stroke-dasharray="3 3"/>
<line x1="264.5" y1="519" x2="264.5" y2="880" stroke="#808080" stroke-dasharray="3 3"/>
<line x1="295.5" y1="519" x2="295.5" y2="880" stroke="#808080" stroke-dasharray="3 3"/>
<line x1="327.5" y1="519" x2="327.5" y2="880" stroke="#808080" stroke-dasharray="3 3"/>
<line x1="359.5" y1="519" x2="359.5" y2="880" stroke="#808080" stroke-dasharray="3 3"/>
<line x1="390.5" y1="519" x2="390.5" y2="880" stroke="#808080" stroke-dasharray="3 3"/>
<line x1="421.5" y1="519" x2="421.5" y2="880" stroke="#808080" stroke-dasharray="3 3"/>
<line x1="453.5" y1="519" x2="453.5" y2="880" stroke="#808080" stroke-dasharray="3 3"/>
<line x1="485.5" y1="519" x2="485.5" y2="880" stroke="#808080" stroke-dasharray="3 3"/>
<line x1="516.5" y1="519" x2="516.5" y2="880" stroke="#808080" stroke-dasharray="3 3"/>
<line x1="547.5" y1="519" x2="547.5" y2="880" stroke="#808080" stroke-dasharray="3 3"/>
<line x1="579.5" y1="519" x2="579.5" y2="880" stroke="#808080" stroke-dasharray="3 3"/>
<line x1="611.5" y1="519" x2="611.5" y2="880" stroke="#808080" stroke-dasharray="3 3"/>
<clipPath id="pc"><rect x="76" y="518" width="567" height="363"/></clipPath>
<g clip-path="url(#pc)">
<polyline points="76.5,713.6 233.7,713.6 265.2,518.5" fill="none" stroke="#008000" stroke-width="1"/>
<polyline points="76.5,534.0 107.9,645.5 139.4,865.5 170.8,869.3 202.3,881.0 233.7,862.9 265.2,645.5 296.6,570.8 328.1,558.1 359.5,555.0 390.9,556.8 422.4,547.0 453.8,551.5 485.3,548.1 516.7,542.7 548.2,541.5 579.6,540.5 611.0,540.5 642.5,540.5" fill="none" stroke="#FF0000" stroke-width="1"/>
<polyline points="76.5,518.7 107.9,528.4 139.4,544.1 170.8,542.8 202.3,539.5 233.7,542.1 265.2,528.9 296.6,520.8 328.1,521.1 353.2,523.0 390.9,520.7 422.4,520.5 453.8,520.5 485.3,520.0 516.7,520.0 548.2,520.0 579.6,520.0 611.0,520.0 642.5,520.0" fill="none" stroke="#0000FF" stroke-width="1"/>
</g>
<line x1="74" y1="518.5" x2="643" y2="518.5" stroke="#000" stroke-width="1.3"/>
<line x1="642.5" y1="518" x2="642.5" y2="880" stroke="#000" stroke-width="1" stroke-dasharray="4 2"/>
<rect x="74" y="518" width="2" height="364" fill="#000"/>
<rect x="74" y="880" width="570" height="2" fill="#000"/>
<line x1="71" y1="856.5" x2="74" y2="856.5" stroke="#808080"/>
<line x1="73" y1="862.5" x2="74" y2="862.5" stroke="#808080"/>
<line x1="73" y1="867.5" x2="74" y2="867.5" stroke="#808080"/>
<line x1="73" y1="873.5" x2="74" y2="873.5" stroke="#808080"/>
<line x1="73" y1="878.5" x2="74" y2="878.5" stroke="#808080"/>
<line x1="71" y1="828.5" x2="74" y2="828.5" stroke="#808080"/>
<line x1="73" y1="835.5" x2="74" y2="835.5" stroke="#808080"/>
<line x1="73" y1="840.5" x2="74" y2="840.5" stroke="#808080"/>
<line x1="73" y1="846.5" x2="74" y2="846.5" stroke="#808080"/>
<line x1="73" y1="851.5" x2="74" y2="851.5" stroke="#808080"/>
<line x1="71" y1="801.5" x2="74" y2="801.5" stroke="#808080"/>
<line x1="73" y1="807.5" x2="74" y2="807.5" stroke="#808080"/>
<line x1="73" y1="813.5" x2="74" y2="813.5" stroke="#808080"/>
<line x1="73" y1="818.5" x2="74" y2="818.5" stroke="#808080"/>
<line x1="73" y1="824.5" x2="74" y2="824.5" stroke="#808080"/>
<line x1="71" y1="773.5" x2="74" y2="773.5" stroke="#808080"/>
<line x1="73" y1="780.5" x2="74" y2="780.5" stroke="#808080"/>
<line x1="73" y1="785.5" x2="74" y2="785.5" stroke="#808080"/>
<line x1="73" y1="791.5" x2="74" y2="791.5" stroke="#808080"/>
<line x1="73" y1="796.5" x2="74" y2="796.5" stroke="#808080"/>
<line x1="71" y1="746.5" x2="74" y2="746.5" stroke="#808080"/>
<line x1="73" y1="752.5" x2="74" y2="752.5" stroke="#808080"/>
<line x1="73" y1="758.5" x2="74" y2="758.5" stroke="#808080"/>
<line x1="73" y1="763.5" x2="74" y2="763.5" stroke="#808080"/>
<line x1="73" y1="769.5" x2="74" y2="769.5" stroke="#808080"/>
<line x1="71" y1="719.5" x2="74" y2="719.5" stroke="#808080"/>
<line x1="73" y1="725.5" x2="74" y2="725.5" stroke="#808080"/>
<line x1="73" y1="730.5" x2="74" y2="730.5" stroke="#808080"/>
<line x1="73" y1="736.5" x2="74" y2="736.5" stroke="#808080"/>
<line x1="73" y1="741.5" x2="74" y2="741.5" stroke="#808080"/>
<line x1="71" y1="691.5" x2="74" y2="691.5" stroke="#808080"/>
<line x1="73" y1="697.5" x2="74" y2="697.5" stroke="#808080"/>
<line x1="73" y1="703.5" x2="74" y2="703.5" stroke="#808080"/>
<line x1="73" y1="708.5" x2="74" y2="708.5" stroke="#808080"/>
<line x1="73" y1="714.5" x2="74" y2="714.5" stroke="#808080"/>
<line x1="71" y1="664.5" x2="74" y2="664.5" stroke="#808080"/>
<line x1="73" y1="670.5" x2="74" y2="670.5" stroke="#808080"/>
<line x1="73" y1="676.5" x2="74" y2="676.5" stroke="#808080"/>
<line x1="73" y1="681.5" x2="74" y2="681.5" stroke="#808080"/>
<line x1="73" y1="687.5" x2="74" y2="687.5" stroke="#808080"/>
<line x1="71" y1="636.5" x2="74" y2="636.5" stroke="#808080"/>
<line x1="73" y1="643.5" x2="74" y2="643.5" stroke="#808080"/>
<line x1="73" y1="648.5" x2="74" y2="648.5" stroke="#808080"/>
<line x1="73" y1="654.5" x2="74" y2="654.5" stroke="#808080"/>
<line x1="73" y1="659.5" x2="74" y2="659.5" stroke="#808080"/>
<line x1="71" y1="609.5" x2="74" y2="609.5" stroke="#808080"/>
<line x1="73" y1="615.5" x2="74" y2="615.5" stroke="#808080"/>
<line x1="73" y1="621.5" x2="74" y2="621.5" stroke="#808080"/>
<line x1="73" y1="626.5" x2="74" y2="626.5" stroke="#808080"/>
<line x1="73" y1="632.5" x2="74" y2="632.5" stroke="#808080"/>
<line x1="71" y1="582.5" x2="74" y2="582.5" stroke="#808080"/>
<line x1="73" y1="588.5" x2="74" y2="588.5" stroke="#808080"/>
<line x1="73" y1="593.5" x2="74" y2="593.5" stroke="#808080"/>
<line x1="73" y1="599.5" x2="74" y2="599.5" stroke="#808080"/>
<line x1="73" y1="604.5" x2="74" y2="604.5" stroke="#808080"/>
<line x1="71" y1="554.5" x2="74" y2="554.5" stroke="#808080"/>
<line x1="73" y1="560.5" x2="74" y2="560.5" stroke="#808080"/>
<line x1="73" y1="566.5" x2="74" y2="566.5" stroke="#808080"/>
<line x1="73" y1="571.5" x2="74" y2="571.5" stroke="#808080"/>
<line x1="73" y1="577.5" x2="74" y2="577.5" stroke="#808080"/>
<line x1="71" y1="527.5" x2="74" y2="527.5" stroke="#808080"/>
<line x1="73" y1="533.5" x2="74" y2="533.5" stroke="#808080"/>
<line x1="73" y1="538.5" x2="74" y2="538.5" stroke="#808080"/>
<line x1="73" y1="544.5" x2="74" y2="544.5" stroke="#808080"/>
<line x1="73" y1="549.5" x2="74" y2="549.5" stroke="#808080"/>
<line x1="73" y1="522.5" x2="74" y2="522.5" stroke="#808080"/>
<line x1="76.5" y1="882" x2="76.5" y2="886" stroke="#808080"/>
<line x1="83.5" y1="882" x2="83.5" y2="884" stroke="#808080"/>
<line x1="89.5" y1="882" x2="89.5" y2="884" stroke="#808080"/>
<line x1="95.5" y1="882" x2="95.5" y2="884" stroke="#808080"/>
<line x1="102.5" y1="882" x2="102.5" y2="884" stroke="#808080"/>
<line x1="107.5" y1="882" x2="107.5" y2="886" stroke="#808080"/>
<line x1="114.5" y1="882" x2="114.5" y2="884" stroke="#808080"/>
<line x1="121.5" y1="882" x2="121.5" y2="884" stroke="#808080"/>
<line x1="127.5" y1="882" x2="127.5" y2="884" stroke="#808080"/>
<line x1="133.5" y1="882" x2="133.5" y2="884" stroke="#808080"/>
<line x1="138.5" y1="882" x2="138.5" y2="886" stroke="#808080"/>
<line x1="146.5" y1="882" x2="146.5" y2="884" stroke="#808080"/>
<line x1="152.5" y1="882" x2="152.5" y2="884" stroke="#808080"/>
<line x1="158.5" y1="882" x2="158.5" y2="884" stroke="#808080"/>
<line x1="165.5" y1="882" x2="165.5" y2="884" stroke="#808080"/>
<line x1="169.5" y1="882" x2="169.5" y2="886" stroke="#808080"/>
<line x1="177.5" y1="882" x2="177.5" y2="884" stroke="#808080"/>
<line x1="183.5" y1="882" x2="183.5" y2="884" stroke="#808080"/>
<line x1="190.5" y1="882" x2="190.5" y2="884" stroke="#808080"/>
<line x1="196.5" y1="882" x2="196.5" y2="884" stroke="#808080"/>
<line x1="201.5" y1="882" x2="201.5" y2="886" stroke="#808080"/>
<line x1="209.5" y1="882" x2="209.5" y2="884" stroke="#808080"/>
<line x1="215.5" y1="882" x2="215.5" y2="884" stroke="#808080"/>
<line x1="221.5" y1="882" x2="221.5" y2="884" stroke="#808080"/>
<line x1="227.5" y1="882" x2="227.5" y2="884" stroke="#808080"/>
<line x1="233.5" y1="882" x2="233.5" y2="886" stroke="#808080"/>
<line x1="240.5" y1="882" x2="240.5" y2="884" stroke="#808080"/>
<line x1="246.5" y1="882" x2="246.5" y2="884" stroke="#808080"/>
<line x1="253.5" y1="882" x2="253.5" y2="884" stroke="#808080"/>
<line x1="259.5" y1="882" x2="259.5" y2="884" stroke="#808080"/>
<line x1="264.5" y1="882" x2="264.5" y2="886" stroke="#808080"/>
<line x1="271.5" y1="882" x2="271.5" y2="884" stroke="#808080"/>
<line x1="278.5" y1="882" x2="278.5" y2="884" stroke="#808080"/>
<line x1="284.5" y1="882" x2="284.5" y2="884" stroke="#808080"/>
<line x1="290.5" y1="882" x2="290.5" y2="884" stroke="#808080"/>
<line x1="295.5" y1="882" x2="295.5" y2="886" stroke="#808080"/>
<line x1="303.5" y1="882" x2="303.5" y2="884" stroke="#808080"/>
<line x1="309.5" y1="882" x2="309.5" y2="884" stroke="#808080"/>
<line x1="315.5" y1="882" x2="315.5" y2="884" stroke="#808080"/>
<line x1="322.5" y1="882" x2="322.5" y2="884" stroke="#808080"/>
<line x1="327.5" y1="882" x2="327.5" y2="886" stroke="#808080"/>
<line x1="334.5" y1="882" x2="334.5" y2="884" stroke="#808080"/>
<line x1="341.5" y1="882" x2="341.5" y2="884" stroke="#808080"/>
<line x1="347.5" y1="882" x2="347.5" y2="884" stroke="#808080"/>
<line x1="353.5" y1="882" x2="353.5" y2="884" stroke="#808080"/>
<line x1="359.5" y1="882" x2="359.5" y2="886" stroke="#808080"/>
<line x1="366.5" y1="882" x2="366.5" y2="884" stroke="#808080"/>
<line x1="372.5" y1="882" x2="372.5" y2="884" stroke="#808080"/>
<line x1="378.5" y1="882" x2="378.5" y2="884" stroke="#808080"/>
<line x1="385.5" y1="882" x2="385.5" y2="884" stroke="#808080"/>
<line x1="390.5" y1="882" x2="390.5" y2="886" stroke="#808080"/>
<line x1="397.5" y1="882" x2="397.5" y2="884" stroke="#808080"/>
<line x1="404.5" y1="882" x2="404.5" y2="884" stroke="#808080"/>
<line x1="410.5" y1="882" x2="410.5" y2="884" stroke="#808080"/>
<line x1="416.5" y1="882" x2="416.5" y2="884" stroke="#808080"/>
<line x1="421.5" y1="882" x2="421.5" y2="886" stroke="#808080"/>
<line x1="429.5" y1="882" x2="429.5" y2="884" stroke="#808080"/>
<line x1="435.5" y1="882" x2="435.5" y2="884" stroke="#808080"/>
<line x1="441.5" y1="882" x2="441.5" y2="884" stroke="#808080"/>
<line x1="448.5" y1="882" x2="448.5" y2="884" stroke="#808080"/>
<line x1="453.5" y1="882" x2="453.5" y2="886" stroke="#808080"/>
<line x1="460.5" y1="882" x2="460.5" y2="884" stroke="#808080"/>
<line x1="466.5" y1="882" x2="466.5" y2="884" stroke="#808080"/>
<line x1="473.5" y1="882" x2="473.5" y2="884" stroke="#808080"/>
<line x1="479.5" y1="882" x2="479.5" y2="884" stroke="#808080"/>
<line x1="485.5" y1="882" x2="485.5" y2="886" stroke="#808080"/>
<line x1="492.5" y1="882" x2="492.5" y2="884" stroke="#808080"/>
<line x1="498.5" y1="882" x2="498.5" y2="884" stroke="#808080"/>
<line x1="504.5" y1="882" x2="504.5" y2="884" stroke="#808080"/>
<line x1="510.5" y1="882" x2="510.5" y2="884" stroke="#808080"/>
<line x1="516.5" y1="882" x2="516.5" y2="886" stroke="#808080"/>
<line x1="523.5" y1="882" x2="523.5" y2="884" stroke="#808080"/>
<line x1="529.5" y1="882" x2="529.5" y2="884" stroke="#808080"/>
<line x1="536.5" y1="882" x2="536.5" y2="884" stroke="#808080"/>
<line x1="542.5" y1="882" x2="542.5" y2="884" stroke="#808080"/>
<line x1="547.5" y1="882" x2="547.5" y2="886" stroke="#808080"/>
<line x1="554.5" y1="882" x2="554.5" y2="884" stroke="#808080"/>
<line x1="561.5" y1="882" x2="561.5" y2="884" stroke="#808080"/>
<line x1="567.5" y1="882" x2="567.5" y2="884" stroke="#808080"/>
<line x1="573.5" y1="882" x2="573.5" y2="884" stroke="#808080"/>
<line x1="579.5" y1="882" x2="579.5" y2="886" stroke="#808080"/>
<line x1="586.5" y1="882" x2="586.5" y2="884" stroke="#808080"/>
<line x1="592.5" y1="882" x2="592.5" y2="884" stroke="#808080"/>
<line x1="598.5" y1="882" x2="598.5" y2="884" stroke="#808080"/>
<line x1="605.5" y1="882" x2="605.5" y2="884" stroke="#808080"/>
<line x1="611.5" y1="882" x2="611.5" y2="886" stroke="#808080"/>
<line x1="617.5" y1="882" x2="617.5" y2="884" stroke="#808080"/>
<line x1="624.5" y1="882" x2="624.5" y2="884" stroke="#808080"/>
<line x1="630.5" y1="882" x2="630.5" y2="884" stroke="#808080"/>
<line x1="636.5" y1="882" x2="636.5" y2="884" stroke="#808080"/>
<line x1="642.5" y1="882" x2="642.5" y2="886" stroke="#808080"/>
</svg>
<div class="t" style="left:19px;width:50px;text-align:right;top:850.0px;font-size:11px;line-height:13px">7 000</div>
<div class="t" style="left:19px;width:50px;text-align:right;top:822.0px;font-size:11px;line-height:13px">7 200</div>
<div class="t" style="left:19px;width:50px;text-align:right;top:795.0px;font-size:11px;line-height:13px">7 400</div>
<div class="t" style="left:19px;width:50px;text-align:right;top:767.0px;font-size:11px;line-height:13px">7 600</div>
<div class="t" style="left:19px;width:50px;text-align:right;top:740.0px;font-size:11px;line-height:13px">7 800</div>
<div class="t" style="left:19px;width:50px;text-align:right;top:713.0px;font-size:11px;line-height:13px">8 000</div>
<div class="t" style="left:19px;width:50px;text-align:right;top:685.0px;font-size:11px;line-height:13px">8 200</div>
<div class="t" style="left:19px;width:50px;text-align:right;top:658.0px;font-size:11px;line-height:13px">8 400</div>
<div class="t" style="left:19px;width:50px;text-align:right;top:630.0px;font-size:11px;line-height:13px">8 600</div>
<div class="t" style="left:19px;width:50px;text-align:right;top:603.0px;font-size:11px;line-height:13px">8 800</div>
<div class="t" style="left:19px;width:50px;text-align:right;top:576.0px;font-size:11px;line-height:13px">9 000</div>
<div class="t" style="left:19px;width:50px;text-align:right;top:548.0px;font-size:11px;line-height:13px">9 200</div>
<div class="t" style="left:19px;width:50px;text-align:right;top:521.0px;font-size:11px;line-height:13px">9 400</div>
<div class="t" style="left:45.5px;width:60px;text-align:center;top:888px;font-size:11px;line-height:13px">0</div>
<div class="t" style="left:76.5px;width:60px;text-align:center;top:888px;font-size:11px;line-height:13px">100</div>
<div class="t" style="left:107.5px;width:60px;text-align:center;top:888px;font-size:11px;line-height:13px">200</div>
<div class="t" style="left:138.5px;width:60px;text-align:center;top:888px;font-size:11px;line-height:13px">300</div>
<div class="t" style="left:170.5px;width:60px;text-align:center;top:888px;font-size:11px;line-height:13px">400</div>
<div class="t" style="left:202.5px;width:60px;text-align:center;top:888px;font-size:11px;line-height:13px">500</div>
<div class="t" style="left:233.5px;width:60px;text-align:center;top:888px;font-size:11px;line-height:13px">600</div>
<div class="t" style="left:264.5px;width:60px;text-align:center;top:888px;font-size:11px;line-height:13px">700</div>
<div class="t" style="left:296.5px;width:60px;text-align:center;top:888px;font-size:11px;line-height:13px">800</div>
<div class="t" style="left:328.5px;width:60px;text-align:center;top:888px;font-size:11px;line-height:13px">900</div>
<div class="t" style="left:359.5px;width:60px;text-align:center;top:888px;font-size:11px;line-height:13px">1 000</div>
<div class="t" style="left:390.5px;width:60px;text-align:center;top:888px;font-size:11px;line-height:13px">1 100</div>
<div class="t" style="left:422.5px;width:60px;text-align:center;top:888px;font-size:11px;line-height:13px">1 200</div>
<div class="t" style="left:454.5px;width:60px;text-align:center;top:888px;font-size:11px;line-height:13px">1 300</div>
<div class="t" style="left:485.5px;width:60px;text-align:center;top:888px;font-size:11px;line-height:13px">1 400</div>
<div class="t" style="left:516.5px;width:60px;text-align:center;top:888px;font-size:11px;line-height:13px">1 500</div>
<div class="t" style="left:548.5px;width:60px;text-align:center;top:888px;font-size:11px;line-height:13px">1 600</div>
<div class="t" style="left:580.5px;width:60px;text-align:center;top:888px;font-size:11px;line-height:13px">1 700</div>
<div class="t" style="left:611.5px;width:60px;text-align:center;top:888px;font-size:11px;line-height:13px">1 800</div>
<div class="t" style="left:627.68px;top:926.46px;font-size:16px;line-height:18px;">мкс</div>
<div class="t" style="left:19.59px;top:966.00px;font-size:13px;line-height:15px;">0</div>
<div class="btn" style="left:677px;top:485px;width:288px;height:33px;"><div class="bi" style="font-size:16.6px;color:#000;line-height:29px;">продолжить считывание</div></div>
<div class="btn" style="left:996px;top:485px;width:257px;height:33px;"><div class="bi" style="font-size:16.6px;color:#ACA899;line-height:29px;text-shadow:1px 1px 0 #fff">остановить считывание</div></div>
<div class="btn" style="left:690px;top:525px;width:259px;height:33px;"><div class="bi" style="font-size:16.6px;color:#000;line-height:29px;">анализ параметров</div></div>
<div class="btn" style="left:1012px;top:525px;width:225px;height:33px;"><div class="bi" style="font-size:16.6px;color:#000;line-height:29px;">очистить все</div></div>
<div class="t" style="left:811.34px;top:572.75px;font-size:16.6px;line-height:19px;">имя файла для записи</div>
<div class="t" style="left:811.34px;top:605.15px;font-size:16.6px;line-height:19px;">количество записей в файле</div>
<div class="t" style="left:811.34px;top:636.55px;font-size:16.6px;line-height:19px;">количество записей =</div>
<div class="t" style="left:811.34px;top:661.35px;font-size:16.6px;line-height:19px;">количество минералов =</div>
<div class="t" style="left:811.34px;top:684.75px;font-size:16.6px;line-height:19px;">количество обнаружений =</div>
<div class="t" style="left:1068.18px;top:637.26px;font-size:16px;line-height:18px;">198</div>
<div class="t" style="left:1068.18px;top:662.06px;font-size:16px;line-height:18px;">70</div>
<div class="t" style="left:1068.18px;top:685.46px;font-size:16px;line-height:18px;">27</div>
<div class="edit" style="left:1068px;top:565px;width:193px;height:27px;border-right:none"><div class="t" style="left:2px;top:2.5px;font-size:16px;line-height:18px">mas_sign</div></div>
<div class="edit" style="left:1068px;top:597px;width:57px;height:27px;"><div class="t" style="left:2px;top:2.5px;font-size:16px;line-height:18px">1000</div></div>
<div class="edit" style="left:684px;top:661px;width:64px;height:27px;"><div class="t" style="left:2px;top:2.5px;font-size:16px;line-height:18px">198</div></div>
<div class="btn" style="left:748px;top:629px;width:25px;height:40px;"><div class="bi" style="font-size:16.6px;color:#000;line-height:36px;"></div></div>
<div class="btn" style="left:748px;top:669px;width:25px;height:41px;"><div class="bi" style="font-size:16.6px;color:#000;line-height:37px;"></div></div>
<svg style="left:754px;top:641px" width="13" height="18" viewBox="0 0 13 18"><path d="M6.5 1 L10.8 10.2 L8 10.2 L8 16.5 L5 16.5 L5 10.2 L2.2 10.2 Z" fill="#F00" stroke="#000" stroke-width="1"/></svg>
<svg style="left:754px;top:681px" width="13" height="18" viewBox="0 0 13 18"><path d="M6.5 17 L10.8 7.8 L8 7.8 L8 1.5 L5 1.5 L5 7.8 L2.2 7.8 Z" fill="#F00" stroke="#000" stroke-width="1"/></svg>
<div class="btn" style="left:668px;top:717px;width:153px;height:33px;"><div class="bi" style="font-size:16.6px;color:#000;line-height:29px;">посмотреть</div></div>
<div class="edit" style="left:860px;top:743px;width:13px;height:13px;background:#fff"></div>
<div class="t" style="left:884.54px;top:740.55px;font-size:16.6px;line-height:19px;">1 запись на минерал</div>
<div class="edit" style="left:1164px;top:733px;width:73px;height:27px;background:#fff"></div>
<div class="btn" style="left:1216px;top:735px;width:19px;height:23px"></div>
<svg style="left:1220px;top:743px" width="11" height="7" viewBox="0 0 11 7"><path d="M0.5 0.5 L10.5 0.5 L5.5 6 Z" fill="#000"/></svg>
<div class="t" style="left:1166.68px;top:737.26px;font-size:16px;line-height:18px;">все</div>
<div class="btn" style="left:804px;top:765px;width:337px;height:41px;"><div class="bi" style="font-size:16.6px;color:#000;line-height:37px;">запись данных&nbsp; в текстовый файл</div></div>
<div class="btn" style="left:804px;top:813px;width:337px;height:41px;"><div class="bi" style="font-size:16.6px;color:#000;line-height:37px;">запись данных&nbsp; в формате Excel</div></div>
<div class="btn" style="left:836px;top:861px;width:281px;height:41px;"><div class="bi" style="font-size:16.6px;color:#000;line-height:37px;">просмотр данных</div></div>
<div class="btn" style="left:940px;top:909px;width:89px;height:41px;"><div class="bi" style="font-size:16.3px;color:#000;line-height:37px;">Выход</div></div>
<div style="left:524px;top:446px;width:231px;height:132px;background:#0831D9;border-radius:7px 7px 0 0"></div>
<div style="left:524px;top:446px;width:231px;height:33px;border-radius:7px 7px 0 0;background:linear-gradient(#3B8CF8 0px,#2A7BF5 2px,#0D5EEA 5px,#0054E3 10px,#0053E1 20px,#0A5CEB 27px,#1466F0 30px,#0A5BE8 33px)"></div>
<div style="left:527px;top:479px;width:225px;height:96px;background:#ECE9D8"></div>
<div class="t" style="left:531px;top:454px;font-size:18px;line-height:20px;font-weight:bold;color:#fff;letter-spacing:0.8px;text-shadow:1px 1px 0 #0A1E8C">Project1</div>
<div style="left:725px;top:451px;width:23px;height:23px;border:1px solid #fff;border-radius:3px;background:linear-gradient(135deg,#F0A088,#E2603C 40%,#D84A20)"></div>
<svg style="left:729px;top:455px" width="17" height="17" viewBox="0 0 17 17"><path d="M2.5 2.5 L14.5 14.5 M14.5 2.5 L2.5 14.5" stroke="#fff" stroke-width="2.6" stroke-linecap="square"/></svg>
<div class="t" style="left:537.50px;top:496.05px;font-size:12.85px;line-height:15px;">Сеанс связи успешно завершен</div>
<div style="left:602px;top:531px;width:75px;height:28px;box-sizing:border-box;border:1px solid #000;background:#ECE9D8"><div style="left:0;top:0;right:0;bottom:0;border-top:1px solid #fff;border-left:1px solid #fff;border-right:1px solid #716F64;border-bottom:1px solid #716F64"><div style="left:1px;top:1px;right:1px;bottom:1px;border-right:1px solid #ACA899;border-bottom:1px solid #ACA899"></div></div><div style="left:3px;top:3px;right:3px;bottom:3px;border:1px dotted #000"></div></div>
<div class="t" style="left:629.62px;top:538.17px;font-size:12.5px;line-height:14px;">OK</div>
</body></html>
